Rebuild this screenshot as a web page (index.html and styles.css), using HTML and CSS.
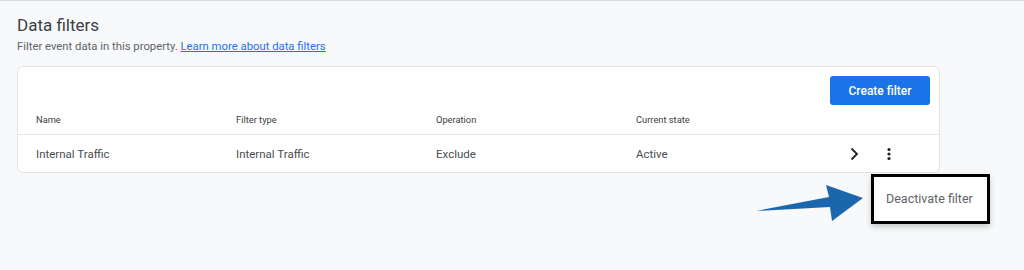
FILE: index.html
```html
<!DOCTYPE html>
<html>
    <head>
        <meta charset="utf-8">
        <title>Data filters</title>
        <link rel="stylesheet" href="styles.css">
    </head>
    <body>
        <div id="page">
            <h1>Data filters</h1>
            <p class="descr">Filter event data in this property. <a href="#">Learn more about data filters</a></p>
            <div id="card">
                <div class="toolbar">
                    <button class="createButton">Create filter</button>
                </div>
                <div class="row head">
                    <span class="cell">Name</span>
                    <span class="cell">Filter type</span>
                    <span class="cell">Operation</span>
                    <span class="cell">Current state</span>
                </div>
                <div class="row">
                    <span class="cell">Internal Traffic</span>
                    <span class="cell">Internal Traffic</span>
                    <span class="cell">Exclude</span>
                    <span class="cell">Active</span>
                    <span class="actions">
                        <svg class="chevron" width="14" height="14" viewBox="0 0 14 14"><path d="M4.5 1.5 L10 7 L4.5 12.5" fill="none" stroke="#202124" stroke-width="1.8"/></svg>
                        <svg class="kebab" width="6" height="14" viewBox="0 0 6 14"><circle cx="3" cy="2.5" r="1.6" fill="#202124"/><circle cx="3" cy="7" r="1.6" fill="#202124"/><circle cx="3" cy="11.5" r="1.6" fill="#202124"/></svg>
                    </span>
                </div>
            </div>
            <!-- annotation over the page -->
            <svg id="arrow" width="110" height="40" viewBox="0 0 110 40"><path d="M0 27 L73 13 L70 1 L107 14 L76 37 L74 23 Z" fill="#1b67ae"/></svg>
            <div id="popup">Deactivate filter</div>
        </div>
    </body>
</html>
```

FILE: styles.css
```css
body {
    margin: 0;
    font-family: Roboto, Arial, sans-serif;
    background-color: #f8f9fa;
    border-top: 1px solid #dadce0;
    height: 269px;
}
#page {
    position: relative;
    padding: 0 84px 0 17px;
}
h1 {
    margin: 0;
    padding-top: 12px;
    font-size: 17px;
    font-weight: 400;
    line-height: 24px;
    color: #3c4043;
}
.descr {
    margin: 3px 0 0 0;
    font-size: 11.3px;
    line-height: 14px;
    color: #5f6368;
}
.descr a {
    color: #1a73e8;
}
#card {
    margin-top: 12px;
    background-color: white;
    border: 1px solid #e3e3e3;
    border-radius: 6px;
}
.toolbar {
    display: flex;
    justify-content: flex-end;
    padding: 9px 9px 0 0;
}
.createButton {
    width: 100px;
    height: 29px;
    border: none;
    border-radius: 3px;
    background-color: #1a73e8;
    color: white;
    font-family: Roboto, Arial, sans-serif;
    font-size: 12px;
    font-weight: 500;
}
.row {
    display: flex;
    align-items: center;
    padding-left: 18px;
    height: 37px;
    font-size: 11.5px;
    color: #4a4d51;
}
.row.head {
    height: 29px;
    font-size: 9.3px;
    color: #3c4043;
    border-bottom: 1px solid #e8e8e8;
}
.cell {
    width: 200px;
}
.actions {
    display: flex;
    align-items: center;
    gap: 25px;
    margin-left: 11px;
}
#arrow {
    position: absolute;
    left: 756px;
    top: 183px;
}
#popup {
    position: absolute;
    left: 871px;
    top: 173px;
    width: 101px;
    height: 44px;
    border: 3px solid black;
    background-color: white;
    box-shadow: 0 3px 6px rgba(0, 0, 0, 0.2);
    font-size: 12.5px;
    color: #5f6368;
    line-height: 44px;
    padding-left: 12px;
}
```
